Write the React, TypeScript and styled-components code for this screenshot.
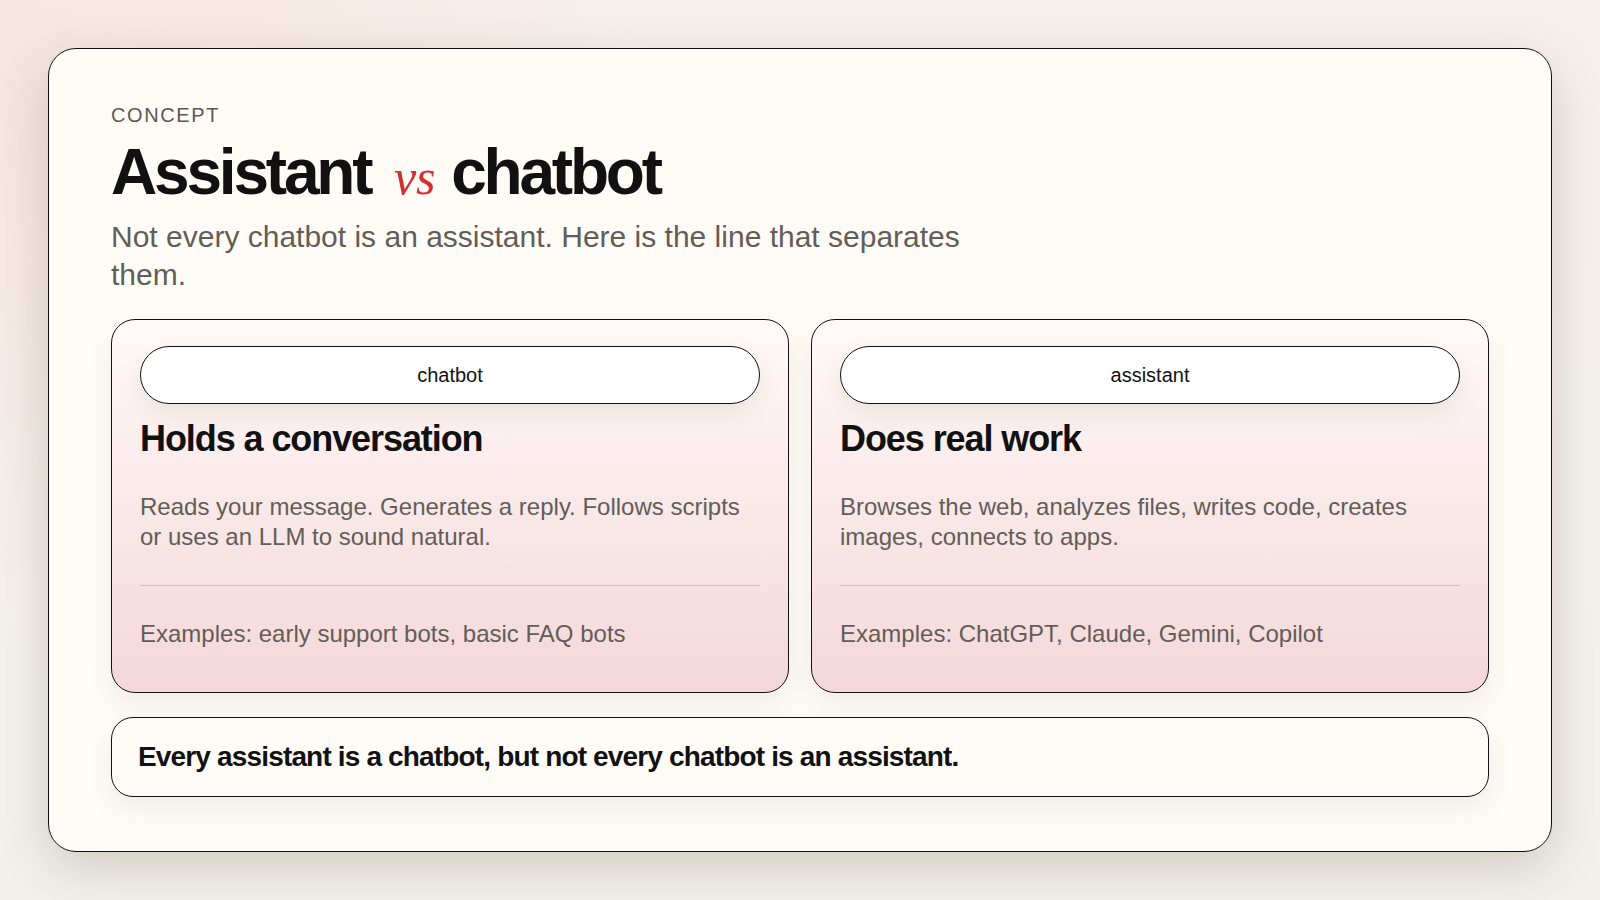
import React, { ReactElement } from 'react'
import styled, { createGlobalStyle } from 'styled-components'

const GlobalStyle = createGlobalStyle`
  html, body {
    margin: 0;
    height: 100%;
  }

  body {
    font-family: 'Liberation Sans', Arial, sans-serif;
    color: #111111;
  }
`

const Page = styled.div`
  box-sizing: border-box;
  width: 1600px;
  height: 900px;
  padding: 48px;
  overflow: hidden;
  background:
    radial-gradient(ellipse 700px 500px at 0 12%, rgb(246 224 218 / 70%), transparent 100%),
    linear-gradient(180deg, #f6f0eb 0%, #f3f0eb 100%);
`

const Slide = styled.main`
  box-sizing: border-box;
  height: 804px;
  padding: 55px 62px 54px;
  background-color: #fffcf8;
  border: 1px solid #111111;
  border-radius: 28px;
  box-shadow: 0 16px 50px rgb(70 65 40 / 20%);
`

const Eyebrow = styled.div`
  font-size: 20px;
  line-height: 23px;
  letter-spacing: 0.08em;
  color: #5c5751;
  text-transform: uppercase;
`

const Title = styled.h1`
  margin: 10px 0 0;
  font-size: 64px;
  line-height: 70px;
  font-weight: 700;
  letter-spacing: -0.05em;
  color: #111111;
`

const Versus = styled.em`
  margin: 0 1px 0 9px;
  font-family: 'Liberation Serif', 'Times New Roman', serif;
  font-weight: 400;
  font-size: 50px;
  line-height: 1;
  letter-spacing: 0;
  color: #d32f2f;
`

const Lead = styled.p`
  margin: 11px 0 0;
  max-width: 900px;
  font-size: 30px;
  line-height: 38px;
  color: #625d57;
`

const Columns = styled.div`
  display: grid;
  grid-template-columns: 1fr 1fr;
  gap: 22px;
  margin-top: 25px;
`

const Card = styled.section`
  box-sizing: border-box;
  height: 374px;
  padding: 26px 28px;
  background: linear-gradient(180deg, #fffaf8 0%, #f4d7d9 100%);
  border: 1px solid #111111;
  border-radius: 24px;
  box-shadow: 0 12px 28px rgb(60 50 30 / 8%);
`

const Pill = styled.div`
  height: 58px;
  box-sizing: border-box;
  display: flex;
  align-items: center;
  justify-content: center;
  font-size: 20px;
  background-color: #ffffff;
  border: 1px solid #111111;
  border-radius: 29px;
  box-shadow: 0 10px 24px rgb(60 50 30 / 8%);
`

const CardTitle = styled.h2`
  margin: 13px 0 0;
  font-size: 36px;
  line-height: 44px;
  font-weight: 700;
  letter-spacing: -0.03em;
`

const CardText = styled.p`
  margin: 31px 0 0;
  font-size: 24px;
  line-height: 30px;
  color: #625d57;
`

const Divider = styled.hr`
  width: 100%;
  margin: 33px 0 0;
  border: 0;
  border-top: 1px solid rgb(17 17 17 / 16%);
`

const Examples = styled.p`
  margin: 33px 0 0;
  font-size: 24px;
  line-height: 30px;
  color: #625d57;
`

const Callout = styled.div`
  box-sizing: border-box;
  height: 80px;
  display: flex;
  align-items: center;
  margin-top: 24px;
  padding: 0 26px;
  font-size: 28px;
  font-weight: 700;
  letter-spacing: -0.03em;
  color: #111111;
  background-color: #fffcf8;
  border: 1px solid #111111;
  border-radius: 22px;
  box-shadow: 0 12px 28px rgb(60 50 30 / 8%);
`

const cards = [
  {
    tag: 'chatbot',
    title: 'Holds a conversation',
    text: 'Reads your message. Generates a reply. Follows scripts or uses an LLM to sound natural.',
    examples: 'Examples: early support bots, basic FAQ bots',
  },
  {
    tag: 'assistant',
    title: 'Does real work',
    text: 'Browses the web, analyzes files, writes code, creates images, connects to apps.',
    examples: 'Examples: ChatGPT, Claude, Gemini, Copilot',
  },
]

const App = (): ReactElement => (
  <Page>
    <GlobalStyle />
    <Slide>
      <Eyebrow>Concept</Eyebrow>
      <Title>
        Assistant <Versus>vs</Versus> chatbot
      </Title>
      <Lead>Not every chatbot is an assistant. Here is the line that separates them.</Lead>

      <Columns>
        {cards.map(card => (
          <Card key={card.tag}>
            <Pill>{card.tag}</Pill>
            <CardTitle>{card.title}</CardTitle>
            <CardText>{card.text}</CardText>
            <Divider />
            <Examples>{card.examples}</Examples>
          </Card>
        ))}
      </Columns>

      <Callout>Every assistant is a chatbot, but not every chatbot is an assistant.</Callout>
    </Slide>
  </Page>
)

export default App
